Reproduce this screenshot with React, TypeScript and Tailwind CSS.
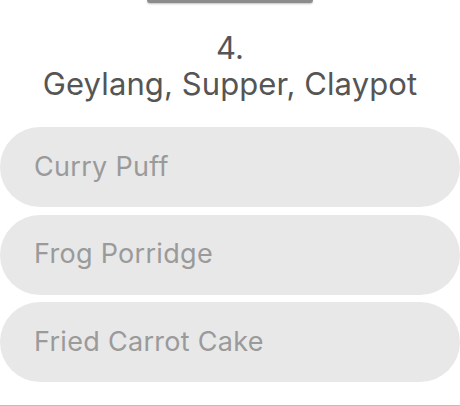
import React from "react";

export default function App() {
  const items = ["Curry Puff", "Frog Porridge", "Fried Carrot Cake"];
  return (
    <div
      className="relative w-[460px] h-[406px] bg-white overflow-hidden flex flex-col"
      style={{ fontFamily: "Inter, 'Noto Sans', sans-serif" }}
    >
      <div className="mx-auto w-[166px] h-[3px] rounded-b-[6px] bg-[#8c8c8c] shadow-[0_1px_2px_rgba(0,0,0,0.25)]" />
      <div className="flex flex-col items-center text-[#555555] text-[31px] leading-[36px] mt-[27px] tracking-[0.1px]">
        <div>4.</div>
        <div>Geylang, Supper, Claypot</div>
      </div>
      <div className="flex flex-col gap-[7.5px] mt-[25px]">
        {items.map((t) => (
          <div
            key={t}
            className="h-[80px] w-full rounded-[40px] bg-[#e8e8e8] flex items-center pl-[34px] text-[27px] text-[#9a9a9a] tracking-[0.3px]"
          >
            {t}
          </div>
        ))}
      </div>
      <div className="absolute left-0 right-0 bottom-0 h-[1px] bg-[#bdbdbd]" />
    </div>
  );
}
